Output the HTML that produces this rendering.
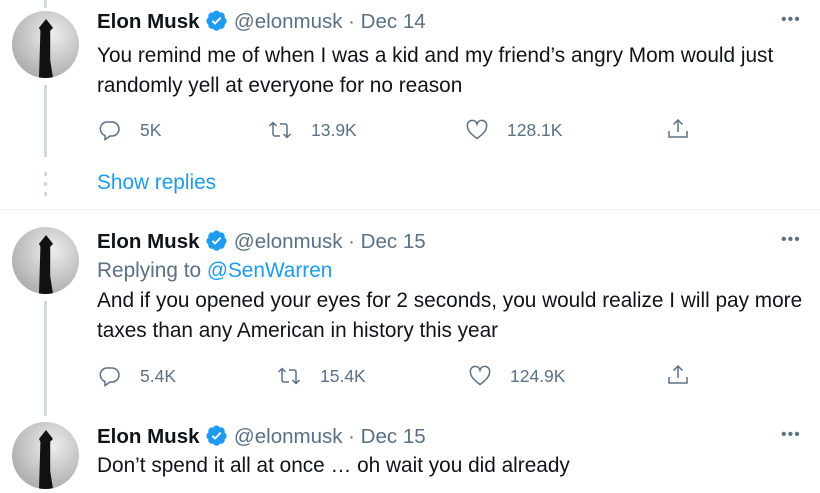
<!DOCTYPE html>
<html><head><meta charset="utf-8"><style>
*{margin:0;padding:0;box-sizing:border-box}
body{width:820px;height:493px;background:#fff;position:relative;overflow:hidden;font-family:"Liberation Sans",Arial,sans-serif;color:#0f1419}
.a{position:absolute;white-space:nowrap}
.t{font-size:20.8px;left:97px}
.h{font-size:20.5px;left:97px}
.n{font-weight:bold}
.g{color:#5b7083}
.b{color:#1d9bf0}
.av{position:absolute;left:12px;width:67px;height:67px;border-radius:50%;background:radial-gradient(circle at 60% 35%,#eee 0,#c8c8c8 45%,#999 100%);overflow:hidden}
.av:after{content:"";position:absolute;left:27px;top:8px;width:14px;height:59px;background:#111;clip-path:polygon(50% 0,100% 15%,80% 20%,80% 70%,100% 100%,0 100%,10% 20%,0 15%)}
.ln{position:absolute;left:44px;width:3px;background:#cfd9de}
.ic{position:absolute;width:24px;height:24px}
.c{font-size:17.5px;color:#5b7083}
.dots{position:absolute;left:781px;font-size:16px;color:#5b7083;letter-spacing:1px}
</style></head><body>
<div class="ln" style="top:0;height:8px"></div>
<div class="av" style="top:11px"></div>
<div class="ln" style="top:85px;height:72px"></div>
<div class="ln" style="top:172px;height:4px"></div>
<div class="ln" style="top:182px;height:4px"></div>
<div class="ln" style="top:192px;height:4px"></div>

<div class="a h" style="top:9px"><span class="n">Elon Musk</span> <svg width="23" height="23" viewBox="0 0 24 24" style="vertical-align:-4px"><path fill="#1d9bf0" d="M22.5 12.5c0-1.58-.88-2.95-2.16-3.6.15-.44.23-.92.23-1.4 0-2.2-1.7-3.99-3.8-3.99-.48 0-.93.08-1.35.25C14.8 2.47 13.5 1.5 12 1.5s-2.8.97-3.42 2.26c-.42-.17-.88-.25-1.35-.25-2.1 0-3.8 1.79-3.8 4 0 .48.08.95.23 1.39-1.28.65-2.16 2.02-2.16 3.6 0 1.5.8 2.8 1.95 3.5-.03.25-.05.5-.05.75 0 2.2 1.7 4 3.8 4 .47 0 .92-.09 1.34-.25.62 1.29 1.93 2.25 3.460 2.25s2.84-.96 3.46-2.25c.42.16.87.25 1.34.25 2.1 0 3.8-1.8 3.8-4 0-.25-.02-.5-.05-.75 1.15-.7 1.95-2 1.95-3.5z"/><path fill="#fff" d="M10.5 16.5l-3.5-3.5 1.4-1.4 2.1 2.1 5.1-5.4 1.5 1.4z"/></svg> <span class="g">@elonmusk · Dec 14</span></div>
<div class="dots" style="top:11px">•••</div>
<div class="a t" style="top:41px;line-height:30px">You remind me of when I was a kid and my friend’s angry Mom would just<br>randomly yell at everyone for no reason</div>

<svg class="ic" style="left:97px;top:118px" viewBox="0 0 24 24"><path fill="none" stroke="#5b7083" stroke-width="1.5" d="M9 4h6a7 7 0 0 1 0 14h-2l-5 3.5V17.5A7 7 0 0 1 9 4z"/></svg>
<div class="a c" style="left:140px;top:120px">5K</div>
<svg class="ic" style="left:268px;top:118px" viewBox="0 0 24 24"><path fill="none" stroke="#5b7083" stroke-width="1.5" d="M1.5 8L5 4.5 8.5 8M5 5v11a2 2 0 0 0 2 2h5M22.5 16L19 19.5 15.5 16M19 19V8a2 2 0 0 0-2-2h-5"/></svg>
<div class="a c" style="left:311px;top:120px">13.9K</div>
<svg class="ic" style="left:465px;top:118px" viewBox="0 0 24 24"><path fill="none" stroke="#5b7083" stroke-width="1.5" d="M12 20.5C6 16 2.5 12.5 2.5 8.5A4.8 4.8 0 0 1 12 6a4.8 4.8 0 0 1 9.5 2.5C21.5 12.5 18 16 12 20.5z"/></svg>
<div class="a c" style="left:507px;top:120px">128.1K</div>
<svg class="ic" style="left:666px;top:117px" viewBox="0 0 24 24"><path fill="none" stroke="#5b7083" stroke-width="1.5" d="M12 15V3M7.5 7.5L12 3l4.5 4.5M3 14v6h18v-6"/></svg>

<div class="a t b" style="top:171px">Show replies</div>
<div style="position:absolute;left:0;top:209px;width:820px;height:1px;background:#e7edf0"></div>

<div class="av" style="top:227px"></div>
<div class="ln" style="top:301px;height:115px"></div>
<div class="a h" style="top:229px"><span class="n">Elon Musk</span> <svg width="23" height="23" viewBox="0 0 24 24" style="vertical-align:-4px"><path fill="#1d9bf0" d="M22.5 12.5c0-1.58-.88-2.95-2.16-3.6.15-.44.23-.92.23-1.4 0-2.2-1.7-3.99-3.8-3.99-.48 0-.93.08-1.35.25C14.8 2.47 13.5 1.5 12 1.5s-2.8.97-3.42 2.26c-.42-.17-.88-.25-1.35-.25-2.1 0-3.8 1.79-3.8 4 0 .48.08.95.23 1.39-1.28.65-2.16 2.02-2.16 3.6 0 1.5.8 2.8 1.95 3.5-.03.25-.05.5-.05.75 0 2.2 1.7 4 3.8 4 .47 0 .92-.09 1.34-.25.62 1.29 1.93 2.25 3.46 2.25s2.84-.96 3.46-2.25c.42.16.87.25 1.34.25 2.1 0 3.8-1.8 3.8-4 0-.25-.02-.5-.05-.75 1.15-.7 1.95-2 1.95-3.5z"/><path fill="#fff" d="M10.5 16.5l-3.5-3.5 1.4-1.4 2.1 2.1 5.1-5.4 1.5 1.4z"/></svg> <span class="g">@elonmusk · Dec 15</span></div>
<div class="dots" style="top:231px">•••</div>
<div class="a t g" style="top:259px">Replying to <span class="b">@SenWarren</span></div>
<div class="a t" style="top:286px;line-height:30px">And if you opened your eyes for 2 seconds, you would realize I will pay more<br>taxes than any American in history this year</div>

<svg class="ic" style="left:97px;top:364px" viewBox="0 0 24 24"><path fill="none" stroke="#5b7083" stroke-width="1.5" d="M9 4h6a7 7 0 0 1 0 14h-2l-5 3.5V17.5A7 7 0 0 1 9 4z"/></svg>
<div class="a c" style="left:140px;top:366px">5.4K</div>
<svg class="ic" style="left:277px;top:364px" viewBox="0 0 24 24"><path fill="none" stroke="#5b7083" stroke-width="1.5" d="M1.5 8L5 4.5 8.5 8M5 5v11a2 2 0 0 0 2 2h5M22.5 16L19 19.5 15.5 16M19 19V8a2 2 0 0 0-2-2h-5"/></svg>
<div class="a c" style="left:320px;top:366px">15.4K</div>
<svg class="ic" style="left:468px;top:364px" viewBox="0 0 24 24"><path fill="none" stroke="#5b7083" stroke-width="1.5" d="M12 20.5C6 16 2.5 12.5 2.5 8.5A4.8 4.8 0 0 1 12 6a4.8 4.8 0 0 1 9.5 2.5C21.5 12.5 18 16 12 20.5z"/></svg>
<div class="a c" style="left:510px;top:366px">124.9K</div>
<svg class="ic" style="left:666px;top:363px" viewBox="0 0 24 24"><path fill="none" stroke="#5b7083" stroke-width="1.5" d="M12 15V3M7.5 7.5L12 3l4.5 4.5M3 14v6h18v-6"/></svg>

<div class="av" style="top:422px"></div>
<div class="a h" style="top:424px"><span class="n">Elon Musk</span> <svg width="23" height="23" viewBox="0 0 24 24" style="vertical-align:-4px"><path fill="#1d9bf0" d="M22.5 12.5c0-1.58-.88-2.95-2.16-3.6.15-.44.23-.92.23-1.4 0-2.2-1.7-3.99-3.8-3.99-.48 0-.93.08-1.35.25C14.8 2.47 13.5 1.5 12 1.5s-2.8.97-3.42 2.26c-.42-.17-.88-.25-1.35-.25-2.1 0-3.8 1.79-3.8 4 0 .48.08.95.23 1.39-1.28.65-2.16 2.02-2.16 3.6 0 1.5.8 2.8 1.95 3.5-.03.25-.05.5-.05.75 0 2.2 1.7 4 3.8 4 .47 0 .92-.09 1.34-.25.62 1.29 1.93 2.25 3.46 2.25s2.84-.96 3.46-2.25c.42.16.87.25 1.34.25 2.1 0 3.8-1.8 3.8-4 0-.25-.02-.5-.05-.75 1.15-.7 1.95-2 1.95-3.5z"/><path fill="#fff" d="M10.5 16.5l-3.5-3.5 1.4-1.4 2.1 2.1 5.1-5.4 1.5 1.4z"/></svg> <span class="g">@elonmusk · Dec 15</span></div>
<div class="dots" style="top:426px">•••</div>
<div class="a t" style="top:454px">Don’t spend it all at once … oh wait you did already</div>
</body></html>
